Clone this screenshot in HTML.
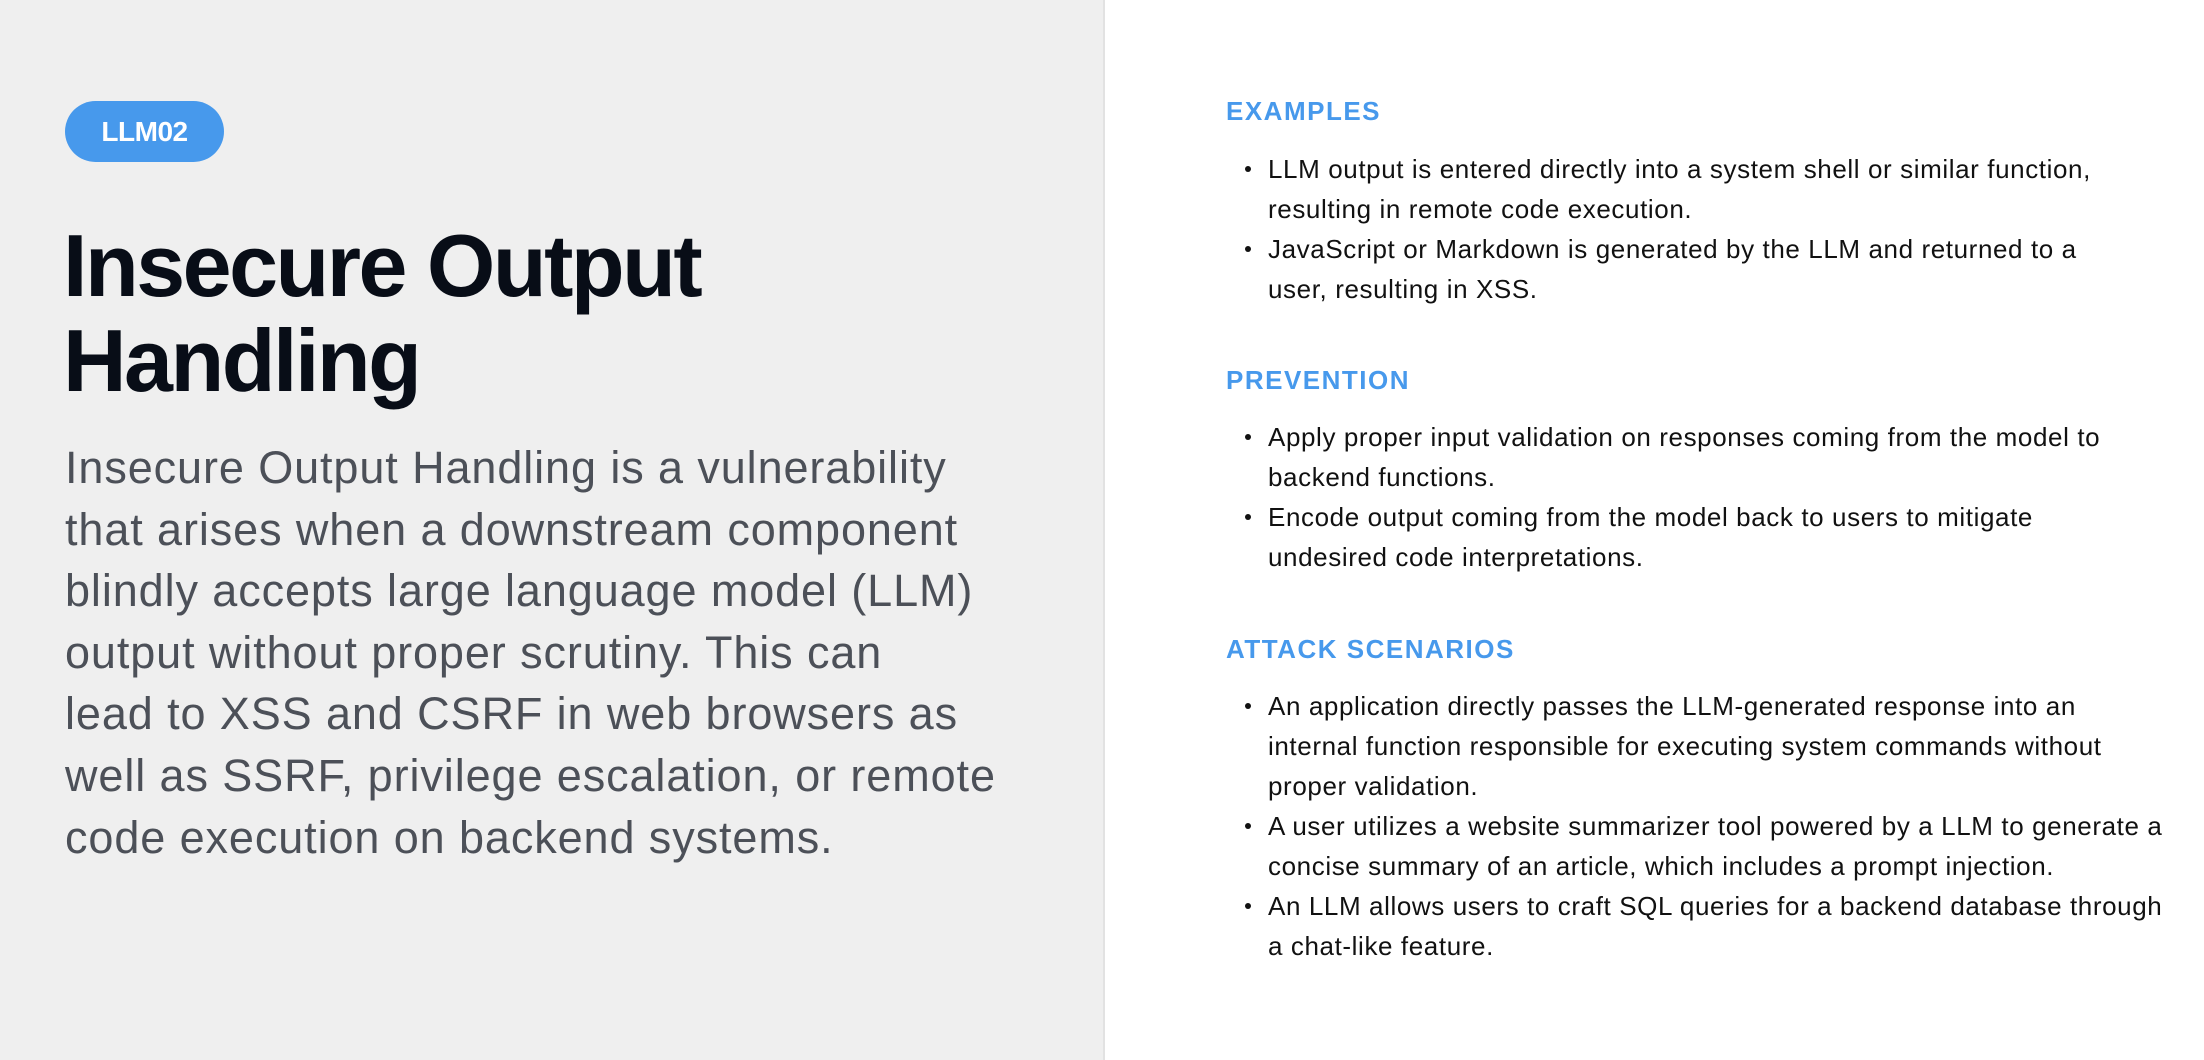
<!DOCTYPE html>
<html><head><meta charset="utf-8"><style>
*{margin:0;padding:0;box-sizing:border-box}
body{width:2204px;height:1060px;position:relative;overflow:hidden;background:#fff;font-family:"Liberation Sans",Arial,sans-serif}
.left{position:absolute;left:0;top:0;width:1105px;height:1060px;background:#efefef;border-right:2px solid #e2e2e2}
.badge{position:absolute;left:65px;top:101px;width:159px;height:61px;border-radius:31px;background:#4799ec;color:#fff;font-weight:bold;font-size:28px;line-height:61px;text-align:center;letter-spacing:-0.5px}
.title{position:absolute;left:63px;top:218px;font-size:88px;line-height:95px;font-weight:bold;color:#080d17;letter-spacing:-2.5px;white-space:nowrap}
.para{position:absolute;left:65px;top:437px;font-size:45px;line-height:61.6px;color:#4c5058;white-space:nowrap;letter-spacing:0.9px}
.h{position:absolute;left:1226px;font-size:26px;line-height:30px;font-weight:bold;color:#4799ec;letter-spacing:1.5px}
.list{position:absolute;left:1268px;font-size:26px;line-height:40px;color:#111;white-space:nowrap;letter-spacing:0.6px}
.list div{position:relative}
.list div::before{content:"";position:absolute;left:-23px;top:17px;width:6px;height:6px;border-radius:50%;background:#111}
</style></head><body>
<div class="left"></div>
<div class="badge">LLM02</div>
<div class="title">Insecure Output<br>Handling</div>
<div class="para">Insecure Output Handling is a vulnerability<br>that arises when a downstream component<br>blindly accepts large language model (LLM)<br>output without proper scrutiny. This can<br>lead to XSS and CSRF in web browsers as<br>well as SSRF, privilege escalation, or remote<br>code execution on backend systems.</div>

<div class="h" style="top:96px">EXAMPLES</div>
<div class="list" style="top:149px">
<div>LLM output is entered directly into a system shell or similar function,<br>resulting in remote code execution.</div>
<div>JavaScript or Markdown is generated by the LLM and returned to a<br>user, resulting in XSS.</div>
</div>

<div class="h" style="top:365px">PREVENTION</div>
<div class="list" style="top:417px">
<div>Apply proper input validation on responses coming from the model to<br>backend functions.</div>
<div>Encode output coming from the model back to users to mitigate<br>undesired code interpretations.</div>
</div>

<div class="h" style="top:634px">ATTACK SCENARIOS</div>
<div class="list" style="top:686px">
<div>An application directly passes the LLM-generated response into an<br>internal function responsible for executing system commands without<br>proper validation.</div>
<div>A user utilizes a website summarizer tool powered by a LLM to generate a<br>concise summary of an article, which includes a prompt injection.</div>
<div>An LLM allows users to craft SQL queries for a backend database through<br>a chat-like feature.</div>
</div>
</body></html>
